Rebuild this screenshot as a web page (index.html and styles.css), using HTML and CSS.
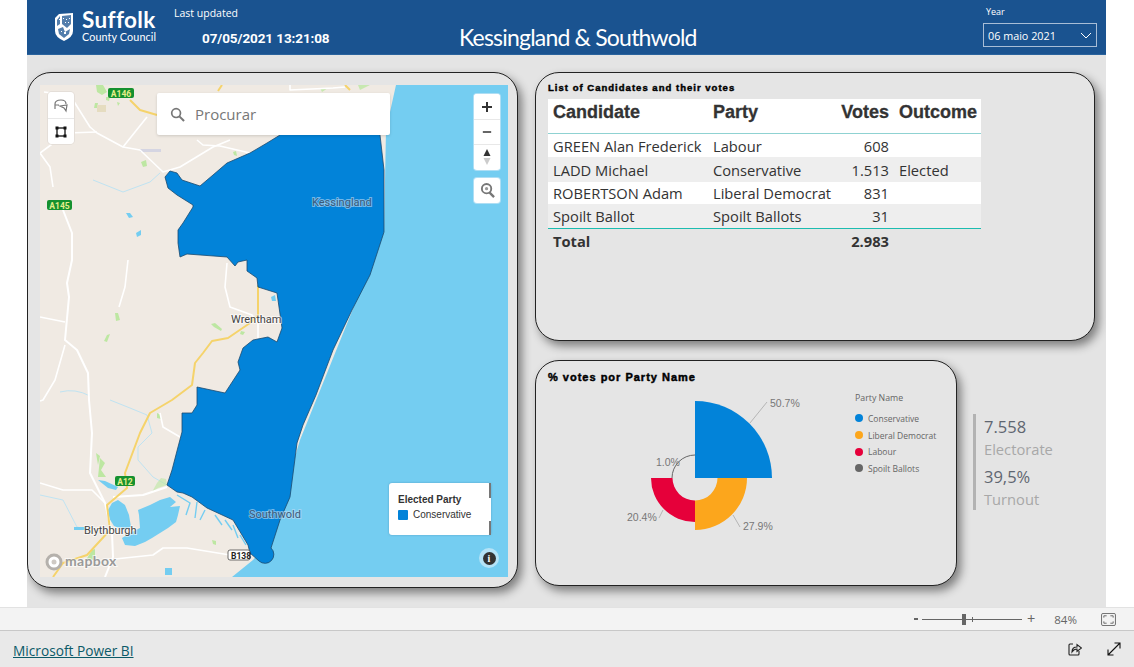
FILE: index.html
```html
<!DOCTYPE html>
<html lang="en">
<head>
<meta charset="utf-8">
<title>Kessingland &amp; Southwold</title>
<link rel="stylesheet" href="styles.css">
</head>
<body>
<div class="stage">
  <div class="report">
    <header class="topbar">
      <div class="logo">
        <svg class="shield" viewBox="0 0 20 30" width="20" height="30">
          <path d="M1 6 L5 2 L19 1 L19 19 Q19 25 10 29 Q1 25 1 19 Z" fill="#fff"/>
          <path d="M3 8 L6 4 L6 12 L3 14 Z M8 4 L17 3 L17 12 L13 16 L8 12 Z M4 17 L9 15 L11 20 L16 17 L15 22 L10 26 L5 22 Z" fill="#1a5390" opacity=".75"/>
          <path d="M5 7h1v1h-1z M9 6h1v1h-1z M12 7h1v1h-1z M15 6h1v1h-1z M11 10h1v1h-1z M7 10h1v1h-1z M14 10h1v1h-1z M10 20h2v2h-2z M7 19h1v1h-1z" fill="#fff"/>
        </svg>
        <div class="logo-text">
          <span class="logo-big">Suffolk</span>
          <span class="logo-small">County Council</span>
        </div>
      </div>
      <div class="updated">
        <span class="updated-label">Last updated</span>
        <span class="updated-value">07/05/2021 13:21:08</span>
      </div>
      <h1 class="title">Kessingland &amp; Southwold</h1>
      <div class="year">
        <span class="year-label">Year</span>
        <div class="year-select">
          <span>06 maio 2021</span>
          <svg viewBox="0 0 12 7" width="12" height="7"><path d="M1 1 L6 6 L11 1" fill="none" stroke="#fff" stroke-width="1"/></svg>
        </div>
      </div>
    </header>

    <main class="board">
      <section class="panel map-panel">
        <div class="map">
          <svg class="map-art" viewBox="40 85 468 492" width="468" height="492">
            <rect x="40" y="85" width="468" height="492" fill="#f0eae3"/>
            <!-- sea -->
            <path d="M396 85 L508 85 L508 577 L232 577 L253 560 L270 540 L300 440 L384 232 L386 130 Z" fill="#74cdf1"/>
            <!-- rivers -->
            <g fill="none" stroke="#bfe3f2" stroke-width="1">
              <path d="M110 400 L130 408 L147 415 L152 433 L138 447 L138 460 L153 477 L167 485"/>
              <path d="M40 495 L63 500 L77 527 L90 530"/>
              <path d="M93 180 L123 192 L150 182 L160 173"/>
              <path d="M60 392 Q75 388 90 396"/>
            </g>
            <!-- estuary -->
            <g fill="#74cdf1">
              <path d="M108 510 L112 503 L118 500 L125 505 L129 515 L131 527 L124 530 L114 526 L109 518 Z"/>
              <path d="M125 545 L122 538 L132 532 L140 528 L139 515 L138 510 L150 505 L160 500 L170 497 L176 502 L170 507 L180 506 L178 515 L176 522 L168 528 L160 533 L152 538 L145 542 L135 546 Z"/>
              <path d="M98 480 L105 481 L118 487 L116 490 L108 488 Z"/>
              <path d="M74 527 H86 V530 H74 Z"/>
              <rect x="165" y="568" width="7" height="7"/>
              <path d="M126 213 L130 213 L133 217 L129 218 Z M136 233 L141 230 L141 235 L137 237 Z M271 297 L275 295 L276 301 L272 301 Z"/>
            </g>
            <g fill="none" stroke="#74cdf1" stroke-width="1.400">
              <path d="M177 495 L190 503 L186 515"/>
              <path d="M197 502 L195 518"/>
              <path d="M205 510 L200 520"/>
              <path d="M215 515 L222 525"/>
              <path d="M225 520 L232 530"/>
              <path d="M233 525 L238 538"/>
              <path d="M240 535 L246 545"/>
            </g>
            <!-- green -->
            <g fill="#bde7a2">
              <path d="M96 85 L103 85 L107 92 L102 95 L97 92 Z M106 97 L110 97 L109 101 L106 100 Z M117 102 L120 103 L118 106 Z M95 103 L98 103 L97 108 L94 108 Z"/>
              <path d="M141 162 L146 160 L147 166 L143 167 Z M233 152 L236 151 L237 156 L234 155 Z"/>
              <path d="M115 313 L118 313 L120 320 L116 321 Z M107 335 L110 334 L107 342 L104 341 Z M211 324 L215 323 L222 329 L221 331 L214 327 Z M241 331 L245 332 L243 335 L240 334 Z"/>
              <path d="M96 453 L100 456 L98 465 Z M100 458 L105 463 L101 470 L106 477 L98 477 Z M157 413 L161 415 L161 419 L157 418 Z M212 540 L216 541 L216 545 L213 544 Z"/>
              <path d="M92 550 L95 549 L95 560 L86 560 Z"/>
              <path d="M152 492 L157 483 L161 478 L166 479 L167 485 L158 488 Z" opacity=".6"/>
              <path d="M320 88 L328 88 L322 92 Z M358 85 L370 85 L360 90 Z" opacity=".8"/>
            </g>
            <path d="M97 105 L106 105 L106 112 L97 112 Z" fill="#e5dcc0"/>
            <rect x="140" y="149" width="21" height="3" fill="#d5d5e2"/>
            <!-- white roads -->
            <g fill="none" stroke="#fff" stroke-width="1.6" stroke-linejoin="round">
              <path d="M44 92 L67 95 L73 100 L90 127 L97 133 L123 147 L140 150 L163 172 L180 167 L213 147 L230 140"/>
              <path d="M40 153 L67 133 L97 132"/>
              <path d="M40 153 L50 167 L53 187"/>
              <path d="M123 147 L147 117"/>
              <path d="M197 140 L203 145 L220 146 L250 153"/>
              <path d="M290 85 L290 90 L333 88 L345 87"/>
              <path d="M63 210 L72 233 L72 260 L67 283 L69 297 L65 340 L77 350 L88 373 L89 400 L92 433 L90 473 L105 503 L112 533 L113 557 L105 577" stroke-width="2"/>
              <path d="M65 345 L55 380 L43 400 L40 401"/>
              <path d="M40 317 L65 322"/>
              <path d="M128 260 L125 287 L119 307"/>
              <path d="M227 263 L225 287 L230 307 L252 315 L258 323 L258 338"/>
              <path d="M40 483 L63 490 L92 490 L105 503"/>
              <path d="M113 497 L143 495 L167 487" stroke-width="2.2"/>
              <path d="M115 559 L153 555 L163 548 L187 548 L230 555"/>
              <path d="M160 413 L163 427 L180 437"/>
            </g>
            <!-- yellow roads -->
            <g fill="none" stroke="#f5d36b" stroke-width="2" stroke-linejoin="round">
              <path d="M130 100 L140 110 L157 115"/>
              <path d="M218 91 L222 85"/>
              <path d="M345 85 L350 90"/>
              <path d="M258 285 L258 315 L250 323 L228 338 L212 341 L203 353 L195 363 L192 385 L172 400 L150 413 L140 433 L125 473 L127 488 L107 505 L110 530 L87 555 L63 563 L53 577"/>
            </g>
            <!-- division -->
            <path d="M280 120 L378 120 L380 135 L384 170 L384 232 L370 275 L352 310 L333 350 L316 395 L303 425 L297 443 L290 497 L280 520 L271 548 A7 7 0 1 1 259 561 L250 553 L248 545 L233 520 L207 508 L192 497 L183 493 L177 492 L167 485 L172 470 L178 447 L182 432 L182 413 L192 413 L197 405 L197 387 L225 393 L240 370 L238 362 L243 348 L253 340 L268 337 L277 342 L282 328 L277 293 L258 287 L257 278 L247 271 L247 260 L238 262 L235 266 L227 257 L187 254 L180 257 L178 243 L178 230 L183 223 L193 207 L193 205 L177 195 L168 188 L165 177 L170 171 L177 173 L182 180 L200 186 L213 175 L227 163 L250 153 L267 143 L280 135 Z" fill="#0283d9" stroke="#1c4a6e" stroke-width=".8"/>
            <!-- place labels -->
            <g class="place">
              <text x="312" y="206" class="halo-blue">Kessingland</text>
              <text x="231" y="323">Wrentham</text>
              <text x="249" y="518" class="halo-blue">Southwold</text>
              <text x="84" y="534">Blythburgh</text>
            </g>
            <!-- road shields -->
            <g class="shieldtext">
              <rect x="108" y="88" width="26" height="10" rx="2" fill="#15912f"/>
              <text x="121" y="96.5">A146</text>
              <rect x="47" y="200" width="25" height="10" rx="2" fill="#15912f"/>
              <text x="59.500" y="208.500">A145</text>
              <rect x="115" y="476" width="20" height="10" rx="2" fill="#15912f"/>
              <text x="125" y="484.500">A12</text>
            </g>
            <rect x="228" y="550" width="22" height="10" rx="2" fill="#fff" stroke="#333" stroke-width=".7"/>
            <text x="231" y="558.500" class="b-road">B138</text>
            <!-- mapbox logo -->
            <circle cx="54" cy="562" r="7" fill="#fff" stroke="#b5b1ac" stroke-width="3"/>
            <circle cx="54" cy="562" r="2.500" fill="#cfcac4"/>
            <text x="65" y="566" class="mapbox">mapbox</text>
          </svg>

          <div class="draw-tools">
            <button class="tool">
              <svg viewBox="0 0 18 16" width="18" height="16"><path d="M3 12 V7 Q3 3 9 3 Q14 3 14 7 M8 9 L15 8 L14 14 L12 11 Z M3 8 H7" fill="none" stroke="#777" stroke-width="1.200"/></svg>
            </button>
            <button class="tool">
              <svg viewBox="0 0 12 12" width="12" height="12"><rect x="2" y="2" width="8" height="8" fill="none" stroke="#111" stroke-width="1.300"/><rect x="0.500" y="0.500" width="3" height="3" fill="#111"/><rect x="8.500" y="0.500" width="3" height="3" fill="#111"/><rect x="0.500" y="8.500" width="3" height="3" fill="#111"/><rect x="8.500" y="8.500" width="3" height="3" fill="#111"/></svg>
            </button>
          </div>

          <div class="search">
            <svg viewBox="0 0 16 16" width="15" height="15"><circle cx="6.500" cy="6.500" r="4.700" fill="none" stroke="#777" stroke-width="1.800"/><path d="M10 10 L15 15" stroke="#777" stroke-width="2.200"/></svg>
            <span>Procurar</span>
          </div>

          <div class="zoom-tools">
            <button class="tool plus">
              <svg viewBox="0 0 12 12" width="12" height="12"><path d="M6 1 V11 M1 6 H11" stroke="#333" stroke-width="2"/></svg>
            </button>
            <button class="tool minus">
              <svg viewBox="0 0 12 4" width="10" height="4"><path d="M1 2 H11" stroke="#333" stroke-width="2"/></svg>
            </button>
            <button class="tool compass">
              <svg viewBox="0 0 8 18" width="8" height="18"><path d="M4 1 L7.500 8 H0.500 Z" fill="#333"/><path d="M4 17 L7.500 10 H0.500 Z" fill="#ccc"/></svg>
            </button>
          </div>

          <button class="tool geo">
            <svg viewBox="0 0 16 18" width="15" height="17"><circle cx="7" cy="7" r="5" fill="none" stroke="#777" stroke-width="2"/><circle cx="7" cy="7" r="1.700" fill="#999"/><path d="M10 11 L15 16" stroke="#777" stroke-width="2.500"/></svg>
          </button>

          <div class="legend">
            <span class="legend-title">Elected Party</span>
            <span class="legend-item"><i class="legend-swatch"></i>Conservative</span>
          </div>

          <div class="info"><span>i</span></div>
        </div>
      </section>

      <div class="right-col">
        <section class="panel table-panel">
          <h2 class="panel-title">List of Candidates and their votes</h2>
          <table class="votes">
            <thead>
              <tr><th>Candidate</th><th>Party</th><th class="num">Votes</th><th>Outcome</th></tr>
            </thead>
            <tbody>
              <tr><td>GREEN Alan Frederick</td><td>Labour</td><td class="num">608</td><td></td></tr>
              <tr class="alt"><td>LADD Michael</td><td>Conservative</td><td class="num">1.513</td><td>Elected</td></tr>
              <tr><td>ROBERTSON Adam</td><td>Liberal Democrat</td><td class="num">831</td><td></td></tr>
              <tr class="alt"><td>Spoilt Ballot</td><td>Spoilt Ballots</td><td class="num">31</td><td></td></tr>
            </tbody>
            <tfoot>
              <tr><td>Total</td><td></td><td class="num">2.983</td><td></td></tr>
            </tfoot>
          </table>
        </section>

        <div class="lower">
          <section class="panel chart-panel">
            <h2 class="panel-title chart-title">% votes por Party Name</h2>
            <svg class="rose" viewBox="535 360 300 226" width="300" height="226">
              <path d="M695 401 A77 77 0 0 1 772 478 H695 Z" fill="#0283d9"/>
              <path d="M747 478 A52 52 0 0 1 695 530 V500.500 A22.500 22.500 0 0 0 717.500 478 Z" fill="#fca61c"/>
              <path d="M695 522 A44 44 0 0 1 651 478 H672.500 A22.500 22.500 0 0 0 695 500.500 Z" fill="#e6003a"/>
              <path d="M672 478 A23 23 0 0 1 695 455" fill="none" stroke="#666" stroke-width="1"/>
              <g fill="none" stroke="#b5b5b5" stroke-width="1">
                <path d="M750 423 L767 402"/>
                <path d="M733 515 L740 527"/>
                <path d="M663 510 L659 518"/>
              </g>
              <g class="rose-label">
                <text x="770" y="407">50.7%</text>
                <text x="743" y="530">27.9%</text>
                <text x="627" y="521">20.4%</text>
                <text x="656" y="466">1.0%</text>
              </g>
            </svg>
            <div class="chart-legend">
              <span class="chart-legend-title">Party Name</span>
              <span class="chart-legend-item"><i class="dot c-con"></i>Conservative</span>
              <span class="chart-legend-item"><i class="dot c-lib"></i>Liberal Democrat</span>
              <span class="chart-legend-item"><i class="dot c-lab"></i>Labour</span>
              <span class="chart-legend-item"><i class="dot c-spo"></i>Spoilt Ballots</span>
            </div>
          </section>

          <aside class="kpis">
            <span class="kpi-value">7.558</span>
            <span class="kpi-label">Electorate</span>
            <span class="kpi-value second">39,5%</span>
            <span class="kpi-label">Turnout</span>
          </aside>
        </div>
      </div>
    </main>
  </div>
</div>

<div class="zoombar">
  <span class="zoom-minus"></span>
  <span class="slider"><i class="slider-tick"></i><i class="slider-thumb"></i></span>
  <span class="zoom-plus">+</span>
  <span class="zoom-pct">84%</span>
  <svg class="fit" viewBox="0 0 16 14" width="15" height="13"><rect x=".5" y=".5" width="15" height="13" rx="1.500" fill="none" stroke="#666"/><path d="M3 5 V3 H6 M10 3 H13 V5 M13 9 V11 H10 M6 11 H3 V9" fill="none" stroke="#666"/></svg>
</div>

<footer class="footer">
  <a class="pbi-link" href="#">Microsoft Power BI</a>
  <div class="footer-icons">
    <svg viewBox="0 0 14 14" width="14" height="14"><path d="M5 2 H2 Q1 2 1 3 V12 Q1 13 2 13 H10 Q11 13 11 12 V9" fill="none" stroke="#222" stroke-width="1.100"/><path d="M4 10 Q4 5 9 5 V2.500 L13.500 6 L9 9.500 V7 Q6 7 4 10 Z" fill="none" stroke="#222" stroke-width="1.100"/></svg>
    <svg viewBox="0 0 14 14" width="14" height="14"><path d="M1 13 L13 1 M7.500 1 H13 V6.500 M1 7.500 V13 H6.500" fill="none" stroke="#111" stroke-width="1.100"/></svg>
  </div>
</footer>
</body>
</html>
```

FILE: styles.css
```css
* { box-sizing: border-box; }

html, body {
  margin: 0;
  height: 100%;
}

body {
  width: 1134px;
  height: 667px;
  overflow: hidden;
  display: flex;
  flex-direction: column;
  background: #fff;
  font-family: "Open Sans", "Noto Sans", sans-serif;
}

.stage {
  height: 607px;
  padding: 0 28px 0 27px;
  background: #fff;
}

.report {
  height: 607px;
  background: #e4e4e4;
  overflow: hidden;
}

/* header */
.topbar {
  position: relative;
  height: 55px;
  background: #1a5390;
  color: #fff;
  display: flex;
  border-bottom: 1px solid #2a639d;
}

.logo {
  display: flex;
  align-items: flex-start;
  gap: 8px;
  margin: 12px 0 0 27px;
  width: 120px;
}

.logo-text {
  display: flex;
  flex-direction: column;
  margin-top: -3px;
}

.logo-big {
  font: 700 22.500px/21px "Lato", sans-serif;
  letter-spacing: .35px;
}

.logo-small {
  margin-top: 1px;
  font: 400 10.8px/12px "Lato", sans-serif;
  letter-spacing: .1px;
}

.updated {
  display: flex;
  flex-direction: column;
  width: 220px;
}

.updated-label {
  font-size: 10.500px;
  line-height: 14px;
  margin-top: 6px;
}

.updated-value {
  margin: 9px 0 0 28px;
  font: 700 13.500px/18px "Roboto", sans-serif;
  letter-spacing: -.1px;
  white-space: nowrap;
}

.title {
  margin: 21px 0 0 65px;
  font: 400 23px/32px "Lato", sans-serif;
  letter-spacing: -.8px;
  white-space: nowrap;
}

.year {
  position: absolute;
  left: 956px;
  top: 0;
  width: 114px;
}

.year-label {
  display: block;
  margin: 6px 0 0 3px;
  font-size: 9px;
  line-height: 12px;
}

.year-select {
  margin-top: 5px;
  height: 24px;
  border: 1px solid #a8bdd6;
  display: flex;
  align-items: center;
  justify-content: space-between;
  padding: 0 4px;
  font-size: 10.800px;
}

/* board */
.board {
  display: flex;
  gap: 17px;
  padding: 17px 0 0 0;
}

.panel {
  background: #e5e5e5;
  border: 1px solid #222;
  border-radius: 24px;
  box-shadow: 4px 5px 10px rgba(0, 0, 0, .45);
}

.map-panel {
  width: 491px;
  height: 516px;
  padding: 12px 9px 9px 12px;
}

.map {
  position: relative;
  width: 468px;
  height: 492px;
  overflow: hidden;
}

.map-art {
  display: block;
}

.place text {
  font: 400 11px "Roboto", sans-serif;
  fill: #444;
  paint-order: stroke;
  stroke: rgba(255, 255, 255, .6);
  stroke-width: 2px;
}

.place .halo-blue {
  fill: #3a5a78;
  stroke: rgba(190, 220, 245, .6);
}

.shieldtext text {
  font: 700 8.500px "Roboto", sans-serif;
  fill: #e6ee8c;
  text-anchor: middle;
}

.b-road {
  font: 700 8.500px "Roboto", sans-serif;
  fill: #222;
}

.mapbox {
  font: 700 14px "Lato", sans-serif;
  letter-spacing: .3px;
  fill: #999;
  paint-order: stroke;
  stroke: rgba(255, 255, 255, .65);
  stroke-width: 2px;
}

.tool {
  display: flex;
  align-items: center;
  justify-content: center;
  width: 100%;
  padding: 0;
  border: 0;
  background: #fff;
}

.draw-tools {
  position: absolute;
  left: 8px;
  top: 7px;
  width: 26px;
  border-radius: 4px;
  overflow: hidden;
  box-shadow: 0 0 0 1px #e4ded8;
}

.draw-tools .tool {
  height: 26px;
}

.draw-tools .tool + .tool {
  border-top: 1px solid #e8e8e8;
}

.search {
  position: absolute;
  left: 117px;
  top: 8px;
  width: 233px;
  height: 42px;
  background: #fff;
  border-radius: 2px;
  box-shadow: 0 1px 3px rgba(0, 0, 0, .15);
  display: flex;
  align-items: center;
  gap: 10px;
  padding-left: 13px;
  font-size: 15px;
  color: #777;
}

.zoom-tools {
  position: absolute;
  left: 434px;
  top: 9px;
  width: 26px;
  height: 76px;
  border-radius: 3px;
  overflow: hidden;
  background: #fff;
  box-shadow: 0 0 0 1px rgba(200, 230, 245, .7);
  display: flex;
  flex-direction: column;
}

.zoom-tools .tool {
  height: 25px;
}

.zoom-tools .tool + .tool {
  border-top: 1px solid #e8e8e8;
}

.geo {
  position: absolute;
  left: 434px;
  top: 93px;
  width: 26px;
  height: 25px;
  border-radius: 3px;
  box-shadow: 0 0 0 1px rgba(200, 230, 245, .7);
}

.legend {
  position: absolute;
  left: 349px;
  top: 398px;
  width: 102px;
  height: 52px;
  background: #fff;
  border-radius: 3px;
  border-right: 2px solid #fff;
  box-shadow: 0 0 2px rgba(60, 120, 160, .6);
  padding: 11px 0 0 9px;
  display: flex;
  flex-direction: column;
  gap: 3px;
  color: #333;
}

.legend::before {
  content: "";
  position: absolute;
  right: -2px;
  top: 0;
  height: 15px;
  border-right: 2px solid #777;
}

.legend::after {
  content: "";
  position: absolute;
  right: -2px;
  bottom: 0;
  height: 14px;
  border-right: 2px solid #777;
}

.legend-title {
  font: 700 10px/12px "Liberation Sans", sans-serif;
}

.legend-item {
  display: flex;
  align-items: center;
  gap: 5px;
  font: 400 10px/12px "Liberation Sans", sans-serif;
}

.legend-swatch {
  width: 10px;
  height: 10px;
  border-radius: 1px;
  background: #0283d9;
}

.info {
  position: absolute;
  left: 439px;
  top: 463px;
  width: 20px;
  height: 20px;
  border-radius: 50%;
  background: #b5e3f7;
  display: flex;
  align-items: center;
  justify-content: center;
}

.info span {
  width: 13px;
  height: 13px;
  border-radius: 50%;
  background: #333;
  color: #fff;
  font: 700 10px/13px "Liberation Serif", serif;
  text-align: center;
}

/* right column */
.right-col {
  width: 560px;
  display: flex;
  flex-direction: column;
  gap: 19px;
}

.table-panel {
  height: 269px;
  padding: 9px 12px 0 12px;
}

.panel-title {
  margin: 0;
  font: 700 9.500px/12px "Liberation Sans", sans-serif;
  color: #000;
  letter-spacing: 1.020px;
  -webkit-text-stroke: .45px #000;
}

.votes {
  margin-top: 5px;
  width: 433px;
  border-collapse: separate;
  border-spacing: 0;
  table-layout: fixed;
  color: #333;
  font-size: 14.700px;
}

.votes th:nth-child(1), .votes td:nth-child(1) { width: 160px; }
.votes th:nth-child(2), .votes td:nth-child(2) { width: 120px; }
.votes th:nth-child(3), .votes td:nth-child(3) { width: 66px; }

.votes th {
  height: 35px;
  padding: 0 5px 9px 5px;
  background: #fff;
  text-align: left;
  font: 700 18px/22px "Liberation Sans", sans-serif;
  color: #333;
  border-bottom: 1px solid #8fd2d2;
  -webkit-text-stroke: .3px #333;
  white-space: nowrap;
}

.votes td {
  padding: 0 5px;
  background: #fff;
  white-space: nowrap;
}

.votes tbody tr:nth-child(1) td { height: 23px; }
.votes tbody tr:nth-child(2) td { height: 25px; }
.votes tbody tr:nth-child(3) td { height: 22px; }
.votes tbody tr:nth-child(4) td { height: 24px; }

.votes .alt td {
  background: #eee;
}

.votes .num {
  text-align: right;
}

.votes tfoot td {
  height: 24px;
  background: none;
  font-weight: 700;
  border-top: 1px solid #1cbcb0;
}

.lower {
  display: flex;
  gap: 16px;
}

.chart-panel {
  position: relative;
  width: 422px;
  height: 226px;
  padding: 9px 12px;
}

.chart-title {
  font-size: 11px;
  line-height: 14px;
  letter-spacing: 1px;
}

.rose {
  position: absolute;
  left: -1px;
  top: -1px;
}

.rose-label text {
  font: 400 10.500px "Liberation Sans", sans-serif;
  fill: #777;
}

.chart-legend {
  position: absolute;
  left: 319px;
  top: 30px;
  display: flex;
  flex-direction: column;
  color: #666;
  font-size: 8.500px;
}

.chart-legend-title {
  font-size: 8.800px;
  line-height: 14px;
  margin-bottom: 5px;
}

.chart-legend-item {
  display: flex;
  align-items: center;
  gap: 5px;
  height: 16.700px;
  white-space: nowrap;
}

.dot {
  width: 8px;
  height: 8px;
  border-radius: 50%;
}

.c-con { background: #0283d9; }
.c-lib { background: #fca61c; }
.c-lab { background: #e6003a; }
.c-spo { background: #666; }

.kpis {
  margin-top: 54px;
  height: 96px;
  border-left: 3px solid #b3b3b3;
  padding-left: 8px;
  display: flex;
  flex-direction: column;
  color: #666;
}

.kpi-value {
  font-size: 16.500px;
  line-height: 26px;
  color: #5f6670;
}

.kpi-value.second {
  margin-top: 5px;
}

.kpi-label {
  font-size: 14.700px;
  line-height: 19px;
  color: #a8a8a8;
}

/* bottom bars */
.zoombar {
  height: 24px;
  background: #f3f3f3;
  border-top: 1px solid #e2e2e2;
  border-bottom: 1px solid #c8c8c8;
  display: flex;
  align-items: center;
  position: relative;
  color: #666;
}

.zoom-minus {
  width: 4px;
  height: 2px;
  background: #666;
  margin-left: 914px;
}

.slider {
  position: relative;
  width: 100px;
  height: 1px;
  margin-left: 4px;
  background: #666;
}

.slider-thumb {
  position: absolute;
  left: 40px;
  top: -5px;
  width: 4px;
  height: 11px;
  background: #666;
}

.slider-tick {
  position: absolute;
  left: 50px;
  top: -2px;
  width: 1px;
  height: 5px;
  background: #666;
}

.zoom-plus {
  margin-left: 5px;
  font: 400 14.500px/14px "Open Sans", sans-serif;
}

.zoom-pct {
  margin-left: 19px;
  font-size: 11.500px;
  width: 26px;
  white-space: nowrap;
}

.fit {
  margin-left: 21px;
}

.footer {
  height: 36px;
  background: #e9e9e9;
  display: flex;
  align-items: center;
  justify-content: space-between;
  padding: 2px 13px 0 13px;
}

.pbi-link {
  color: #0b5a68;
  font-size: 13.700px;
  text-decoration: underline;
}

.footer-icons {
  display: flex;
  gap: 25px;
  margin-top: -2px;
}
```
